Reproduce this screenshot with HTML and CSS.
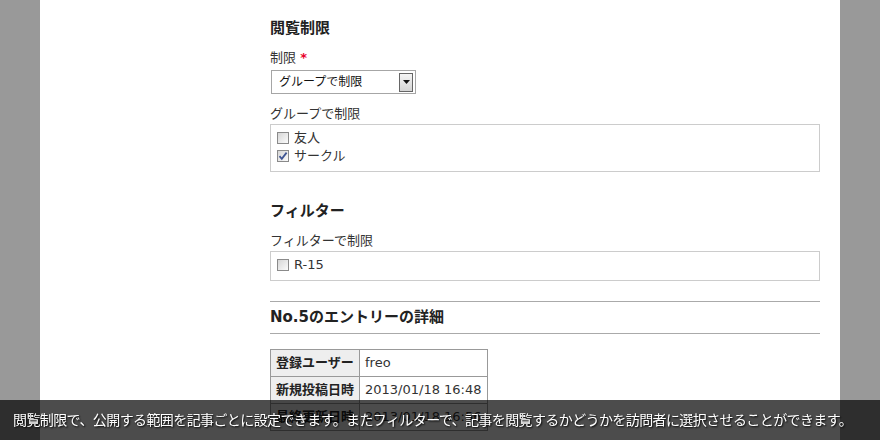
FILE: index.html
```html
<!DOCTYPE html>
<html lang="ja">
<head>
<meta charset="utf-8">
<title>閲覧制限</title>
<link rel="stylesheet" href="styles.css">
</head>
<body>
<div class="page">
  <div class="side"></div>
  <div class="main">
    <h2 class="heading first">閲覧制限</h2>
    <div class="label label-top">制限 <span class="req">*</span></div>
    <div class="select">
      <span class="select-text">グループで制限</span>
      <span class="select-btn"><svg width="7" height="4" viewBox="0 0 7 4"><path d="M0 0H7L3.5 4Z" fill="#111"/></svg></span>
    </div>
    <div class="label">グループで制限</div>
    <div class="box">
      <div class="item"><span class="cb"></span>友人</div>
      <div class="item"><span class="cb"><svg width="10" height="10" viewBox="0 0 10 10"><path d="M1.5 5.2 L3.8 7.8 L8.6 1.6" fill="none" stroke="#3f5593" stroke-width="1.8"/></svg></span>サークル</div>
    </div>
    <h2 class="heading second">フィルター</h2>
    <div class="label">フィルターで制限</div>
    <div class="box">
      <div class="item"><span class="cb"></span>R-15</div>
    </div>
    <h2 class="heading ruled">No.5のエントリーの詳細</h2>
    <table class="detail">
      <tr><th>登録ユーザー</th><td>freo</td></tr>
      <tr><th>新規投稿日時</th><td>2013/01/18 16:48</td></tr>
      <tr><th>最終更新日時</th><td>2013/01/18 16:56</td></tr>
    </table>
  </div>
</div>
<div class="caption">閲覧制限で、公開する範囲を記事ごとに設定できます。またフィルターで、記事を閲覧するかどうかを訪問者に選択させることができます。</div>
</body>
</html>
```
FILE: styles.css
```css
html, body {
  margin: 0;
  padding: 0;
  height: 100%;
  overflow: hidden;
}
body {
  background: #999999;
  font-family: "DejaVu Sans", "Noto Sans CJK JP", sans-serif;
  color: #333333;
  font-size: 13px;
}
.page {
  width: 800px;
  margin: 0 auto;
  min-height: 440px;
  background: #ffffff;
  display: flex;
}
.side {
  width: 230px;
  flex: none;
}
.main {
  width: 550px;
  flex: none;
}
.heading {
  margin: 0;
  font-size: 15px;
  font-weight: bold;
  line-height: 20px;
  color: #222222;
}
.heading.first {
  margin-top: 18px;
}
.heading.second {
  margin-top: 29px;
}
.heading.ruled {
  margin-top: 20px;
  border-top: 1px solid #aaaaaa;
  border-bottom: 1px solid #aaaaaa;
  line-height: 31px;
}
.label {
  line-height: 18px;
  margin-top: 11px;
  margin-bottom: 1px;
}
.label.label-top {
  margin-bottom: 3px;
}
.req {
  color: #e8002a;
  font-weight: bold;
}
.select {
  width: 143px;
  height: 22px;
  margin-left: 1px;
  border: 1px solid #a6a6a6;
  display: flex;
  align-items: center;
  justify-content: space-between;
  box-sizing: content-box;
}
.select-text {
  font-size: 12px;
  color: #111111;
  padding-left: 7px;
  line-height: 18px;
}
.select-btn {
  width: 12px;
  height: 17px;
  margin-right: 2px;
  border: 1px solid #666666;
  background: linear-gradient(#f4f4f4, #d4d4d4);
  display: flex;
  align-items: center;
  justify-content: center;
}
.box {
  border: 1px solid #cccccc;
  padding: 4px 6px 6px;
}
.item {
  display: flex;
  align-items: center;
  line-height: 18px;
}
.cb {
  width: 10px;
  height: 10px;
  border: 1px solid #8a8a8a;
  background: linear-gradient(135deg, #d6d6d6, #fbfbfb);
  margin-right: 5px;
  display: flex;
  align-items: center;
  justify-content: center;
}
.detail {
  margin-top: 15px;
  border-collapse: collapse;
  border: 1px solid #999999;
}
.detail th, .detail td {
  border: 1px solid #999999;
  padding: 4px 5px;
  line-height: 18px;
  font-size: 13px;
  text-align: left;
  white-space: nowrap;
}
.detail th {
  background: #eeeeee;
  color: #222222;
}
.detail td {
  color: #333333;
}
.caption {
  position: fixed;
  left: 0;
  right: 0;
  bottom: 0;
  height: 40px;
  background: rgba(0, 0, 0, 0.7);
  color: #ffffff;
  font-size: 14px;
  letter-spacing: -0.6px;
  line-height: 40px;
  padding-left: 13px;
  white-space: nowrap;
  text-shadow: 1px 1px 2px #000000;
}
```
